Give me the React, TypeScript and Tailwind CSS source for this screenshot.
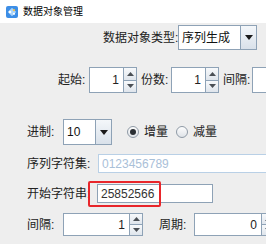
import React from "react";

const Up = () => (
  <svg width="7" height="4" viewBox="0 0 7 4">
    <path d="M0 4 L3.5 0 L7 4 Z" fill="#4a4f55" />
  </svg>
);

const Down = () => (
  <svg width="7" height="4" viewBox="0 0 7 4">
    <path d="M0 0 L3.5 4 L7 0 Z" fill="#4a4f55" />
  </svg>
);

const Spinner = ({ value, field }: { value: string; field: string }) => (
  <div className="flex h-full shrink-0">
    <div
      className={`${field} h-full bg-white border border-[#8ea2b6] flex items-center justify-end pr-[4px] text-[12px] text-[#222]`}
    >
      {value}
    </div>
    <div className="w-[13px] h-full flex flex-col border border-l-0 border-[#8ea2b6]">
      <div className="flex-1 flex items-center justify-center bg-gradient-to-b from-[#f7f9fb] to-[#dfe5ec] border-b border-[#8ea2b6]">
        <Up />
      </div>
      <div className="flex-1 flex items-center justify-center bg-gradient-to-b from-[#f7f9fb] to-[#dfe5ec]">
        <Down />
      </div>
    </div>
  </div>
);

const Combo = ({ value, field }: { value: string; field: string }) => (
  <div className="flex h-full shrink-0 border border-[#8ea2b6] bg-white">
    <div className={`${field} h-full flex items-center pl-[3px] text-[12px] text-[#111]`}>
      {value}
    </div>
    <div className="w-[16px] h-full flex items-center justify-center border-l border-[#8ea2b6] bg-gradient-to-b from-[#f4f7fa] to-[#d9e1ea]">
      <svg width="8" height="5" viewBox="0 0 8 5">
        <path d="M0 0 L8 0 L4 5 Z" fill="#1a1a1a" />
      </svg>
    </div>
  </div>
);

const Radio = ({ checked }: { checked?: boolean }) => (
  <div className="w-[12px] h-[12px] rounded-full border border-[#8f9aa6] bg-gradient-to-b from-[#fdfdfd] to-[#dfe3e8] flex items-center justify-center shrink-0">
    {checked && <div className="w-[6px] h-[6px] rounded-full bg-[#2b2f33]" />}
  </div>
);

export default function App() {
  return (
    <div
      className="relative w-[266px] h-[244px] overflow-hidden bg-[#eeeeee] text-[12px] text-[#222] whitespace-nowrap"
      style={{ fontFamily: '"Liberation Sans", "Noto Sans CJK SC", sans-serif' }}
    >
      {/* title bar */}
      <div className="h-[23px] bg-white flex items-center pl-[6px]">
        <svg width="12" height="12" viewBox="0 0 12 12">
          <rect x="0" y="0" width="12" height="12" rx="2" fill="#3d8ee6" />
          <path d="M6 1.8 L10.2 6 L6 10.2 L1.8 6 Z" fill="#a9d4fb" />
          <circle cx="4" cy="6" r="1.3" fill="#ffffff" />
          <circle cx="8" cy="4.2" r="1.1" fill="#f3c04a" />
          <circle cx="8" cy="7.8" r="1.1" fill="#ffffff" />
        </svg>
        <span className="ml-[5px] text-[10px] text-black leading-none">数据对象管理</span>
      </div>

      {/* 数据对象类型 */}
      <div className="mt-[2px] h-[25px] flex items-center pl-[103px]">
        <span className="w-[75px] shrink-0">数据对象类型:</span>
        <Combo value="序列生成" field="w-[61px]" />
      </div>

      {/* 起始 / 份数 / 间隔 */}
      <div className="mt-[17px] h-[26px] flex items-center pl-[58px]">
        <span className="w-[31px] shrink-0">起始:</span>
        <Spinner value="1" field="w-[35px]" />
        <span className="ml-[4px] w-[30px] shrink-0">份数:</span>
        <Spinner value="1" field="w-[35px]" />
        <span className="ml-[4px] w-[29px] shrink-0">间隔:</span>
        <div className="w-[40px] h-full bg-white border border-[#8ea2b6] shrink-0" />
      </div>

      {/* 进制 + radios */}
      <div className="mt-[26px] h-[26px] flex items-center pl-[27px]">
        <span className="w-[36px] shrink-0">进制:</span>
        <Combo value="10" field="w-[31px]" />
        <div className="ml-[15px] flex items-center gap-[5px]">
          <Radio checked />
          <span>增量</span>
        </div>
        <div className="ml-[8px] flex items-center gap-[5px]">
          <Radio />
          <span>减量</span>
        </div>
      </div>

      {/* 序列字符集 */}
      <div className="mt-[9px] h-[19px] flex items-center pl-[27px]">
        <span className="w-[71px] shrink-0">序列字符集:</span>
        <div className="w-[180px] h-full bg-white border border-[#b9d0e6] flex items-center pl-[3px] text-[#a9c0d8] shrink-0">
          0123456789
        </div>
      </div>

      {/* 开始字符串 */}
      <div className="mt-[11px] h-[19px] flex items-center pl-[27px]">
        <span className="w-[70px] shrink-0">开始字符串:</span>
        <div className="w-[116px] h-full bg-white border border-[#8ea2b6] flex items-center pl-[3px] text-[#333] shrink-0">
          25852566
        </div>
      </div>

      {/* 间隔 / 周期 */}
      <div className="mt-[10px] h-[23px] flex items-center pl-[27px]">
        <span className="w-[36px] shrink-0">间隔:</span>
        <Spinner value="1" field="w-[67px]" />
        <span className="ml-[16px] w-[35px] shrink-0">周期:</span>
        <Spinner value="0" field="w-[68px]" />
      </div>

      {/* red highlight */}
      <div className="absolute left-[88px] top-[181px] w-[73px] h-[26px] border-2 border-[#e8262b] rounded-[2px]" />
    </div>
  );
}
